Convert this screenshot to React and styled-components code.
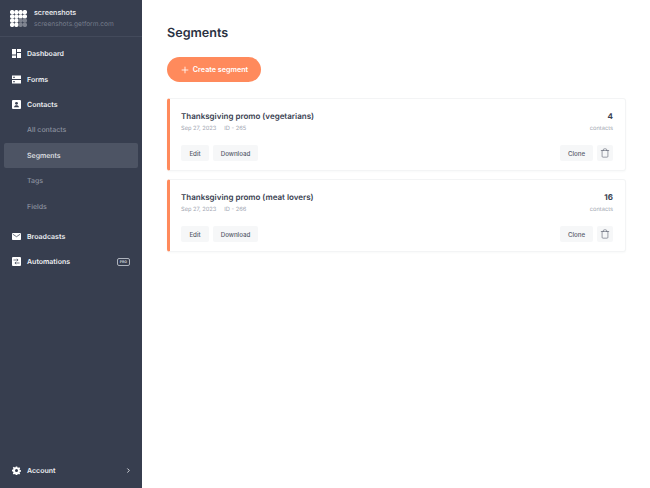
import React from 'react'
import styled, { createGlobalStyle } from 'styled-components'
import { Plus, Trash, ChevronRight } from 'lucide-react'

const GlobalStyle = createGlobalStyle`
    html, body {
        margin: 0;
        padding: 0;
        height: 100%;
        background: #fff;
        font-family: Inter, "Open Sans", sans-serif;
        text-rendering: geometricPrecision;
    }

    * {
        box-sizing: border-box;
    }
`

const Page = styled.div`
    display: flex;
    width: 650px;
    height: 488px;
    overflow: hidden;
`

const Sidebar = styled.aside`
    display: flex;
    flex-direction: column;
    flex: 0 0 142px;
    background: #373e4f;
`

const Brand = styled.div`
    display: flex;
    align-items: center;
    gap: 7px;
    height: 37px;
    padding: 0 10px;
    border-bottom: 1px solid #434a5b;
`

const BrandText = styled.div`
    display: flex;
    flex-direction: column;
    gap: 3px;
`

const BrandName = styled.span`
    color: #f1f2f4;
    font-size: 7.2px;
    font-weight: 500;
    line-height: 9px;
`

const BrandUrl = styled.span`
    color: #747b8a;
    font-size: 6.6px;
    line-height: 8px;
`

const Nav = styled.nav`
    display: flex;
    flex-direction: column;
    padding: 4px 4px 0;
`

const NavItem = styled.div`
    display: flex;
    align-items: center;
    gap: 6px;
    height: 25.4px;
    padding: 0 8px;
    color: #eef0f3;
    font-size: 7px;
    font-weight: 600;
`

const SubItem = styled.div`
    display: flex;
    align-items: center;
    height: 25.4px;
    padding-left: 23px;
    border-radius: 2px;
    color: ${ ({ $active }) => $active ? '#e6e8ec' : '#8b919f' };
    background: ${ ({ $active }) => $active ? '#4d5464' : 'transparent' };
    font-size: 7px;
    font-weight: 500;
`

const NavGap = styled.div`
    height: 5px;
`

const ProTag = styled.span`
    margin-left: auto;
    padding: 1px 2px;
    border: 1px solid #aeb3bd;
    border-radius: 2px;
    color: #c8cbd2;
    font-size: 3.5px;
    font-weight: 700;
    line-height: 4px;
`

const Footer = styled.div`
    margin-top: auto;
    padding: 0 4px 5px;
`

const FooterArrow = styled.span`
    display: flex;
    margin-left: auto;
    margin-right: -2px;
    color: #e4e6ea;
`

const Main = styled.main`
    flex: 1;
    padding: 24px 24px 0 25px;
`

const Title = styled.h1`
    margin: 0 0 14px;
    color: #2b3242;
    font-size: 12.6px;
    font-weight: 600;
    line-height: 19px;
`

const CreateButton = styled.button`
    display: flex;
    align-items: center;
    justify-content: center;
    gap: 3px;
    width: 94px;
    height: 25px;
    margin-bottom: 16px;
    padding: 0;
    border: 0;
    border-radius: 13px;
    background: #ff8a5c;
    color: #fff;
    font-family: inherit;
    font-size: 7.2px;
    font-weight: 600;
`

const CardList = styled.div`
    display: flex;
    flex-direction: column;
    gap: 8px;
`

const Card = styled.article`
    display: flex;
    flex-direction: column;
    height: 73px;
    padding: 12px 12px 9px 11px;
    border: 1px solid #f3f4f5;
    border-left: 3px solid #ff8a5c;
    border-radius: 3px;
    background: #fff;
    box-shadow: 0 1px 2px rgba(40, 50, 70, 0.03);
`

const CardTop = styled.div`
    display: flex;
    justify-content: space-between;
`

const CardTitle = styled.h3`
    margin: 0 0 3px;
    color: #3a4151;
    font-size: 8px;
    font-weight: 600;
    line-height: 11px;
`

const Meta = styled.div`
    display: flex;
    gap: 8px;
    color: #a0a5b0;
    font-size: 5.7px;
    line-height: 8px;
`

const Count = styled.div`
    display: flex;
    flex-direction: column;
    align-items: flex-end;
    gap: 3px;
`

const CountValue = styled.span`
    color: #3a4151;
    font-size: 8px;
    font-weight: 700;
    line-height: 11px;
`

const CountLabel = styled.span`
    color: #a0a5b0;
    font-size: 5.7px;
    line-height: 8px;
`

const CardActions = styled.div`
    display: flex;
    gap: 4px;
    margin-top: auto;
`

const ActionButton = styled.button`
    display: flex;
    align-items: center;
    justify-content: center;
    width: ${ ({ $width }) => $width }px;
    height: 16px;
    margin-left: ${ ({ $push }) => $push ? 'auto' : '0' };
    padding: 0;
    border: 0;
    border-radius: 2px;
    background: #f6f7f8;
    color: #565c6b;
    font-family: inherit;
    font-size: 6.2px;
    font-weight: 500;
`

const LogoMark = () => (
    <svg width="17" height="17" viewBox="0 0 17 17">
        { [ 0, 1, 2, 3 ].map( row => [ 0, 1, 2, 3 ].map( col => (
            <circle
                key={ `${ row }-${ col }` }
                cx={ 2.2 + col * 4.2 }
                cy={ 2.2 + row * 4.2 }
                r="2.25"
                fill={ row > 1 && col > 1 ? '#7f8490' : '#fff' }
            />
        ) ) ) }
    </svg>
)

const DashboardIcon = () => (
    <svg width="9" height="9" viewBox="0 0 9 9" fill="#fff">
        <rect width="4" height="5.500" />
        <rect x="5" width="4" height="3" />
        <rect y="6.500" width="4" height="2.500" />
        <rect x="5" y="4" width="4" height="5" />
    </svg>
)

const FormsIcon = () => (
    <svg width="9" height="9" viewBox="0 0 9 9" fill="#fff">
        <path d="M0 0.500h9v3.500h-9zM0 5h9v3.500h-9z" />
        <rect x="1" y="1.800" width="2" height="0.900" fill="#373e4f" />
        <rect x="1" y="6.300" width="2" height="0.900" fill="#373e4f" />
    </svg>
)

const ContactsIcon = () => (
    <svg width="9" height="9" viewBox="0 0 9 9">
        <rect width="9" height="9" rx="1" fill="#fff" />
        <circle cx="4.500" cy="3.300" r="1.400" fill="#373e4f" />
        <path d="M2 7.200c0.300-1.400 1.300-1.900 2.500-1.900s2.200 0.500 2.500 1.900z" fill="#373e4f" />
    </svg>
)

const BroadcastsIcon = () => (
    <svg width="9" height="9" viewBox="0 0 9 9">
        <rect y="1" width="9" height="7" rx="0.800" fill="#fff" />
        <path d="M0.800 2.200l3.700 2.500 3.700-2.500" fill="none" stroke="#373e4f" strokeWidth="0.700" />
    </svg>
)

const AutomationsIcon = () => (
    <svg width="9" height="9" viewBox="0 0 9 9">
        <rect width="9" height="9" rx="1" fill="#fff" />
        <path d="M1.500 3h4.500M4.800 1.800l1.300 1.200-1.300 1.200M7.500 6h-4.500M4.200 4.800l-1.300 1.200 1.300 1.200" fill="none" stroke="#373e4f" strokeWidth="0.700" />
    </svg>
)

const GearIcon = () => (
    <svg width="9" height="9" viewBox="0 0 24 24" fill="#fff">
        <path fillRule="evenodd" d="M10 1h4l.6 3.100 1.900.8 2.600-1.800 2.800 2.800-1.800 2.600.8 1.900 3.100.6v4l-3.100.6-.8 1.900 1.800 2.600-2.800 2.800-2.600-1.800-1.900.8-.6 3.100h-4l-.6-3.100-1.900-.8-2.600 1.800-2.800-2.800 1.800-2.600-.8-1.900L0 14v-4l3.100-.6.800-1.900-1.800-2.600 2.800-2.800 2.600 1.800 1.900-.8zM12 8a4 4 0 1 0 0 8 4 4 0 0 0 0-8z" />
    </svg>
)

const segments = [
    { id: 265, name: 'Thanksgiving promo (vegetarians)', count: 4 },
    { id: 266, name: 'Thanksgiving promo (meat lovers)', count: 16 }
]

const App = () => (
    <Page>
        <GlobalStyle />
        <Sidebar>
            <Brand>
                <LogoMark />
                <BrandText>
                    <BrandName>screenshots</BrandName>
                    <BrandUrl>screenshots.getform.com</BrandUrl>
                </BrandText>
            </Brand>
            <Nav>
                <NavItem><DashboardIcon />Dashboard</NavItem>
                <NavItem><FormsIcon />Forms</NavItem>
                <NavItem><ContactsIcon />Contacts</NavItem>
                <SubItem>All contacts</SubItem>
                <SubItem $active>Segments</SubItem>
                <SubItem>Tags</SubItem>
                <SubItem>Fields</SubItem>
                <NavGap />
                <NavItem><BroadcastsIcon />Broadcasts</NavItem>
                <NavItem><AutomationsIcon />Automations<ProTag>PRO</ProTag></NavItem>
            </Nav>
            <Footer>
                <NavItem>
                    <GearIcon />Account
                    <FooterArrow><ChevronRight size={ 7 } strokeWidth={ 3 } /></FooterArrow>
                </NavItem>
            </Footer>
        </Sidebar>
        <Main>
            <Title>Segments</Title>
            <CreateButton><Plus size={ 10 } strokeWidth={ 2 } />Create segment</CreateButton>
            <CardList>
                { segments.map( segment => (
                    <Card key={ segment.id }>
                        <CardTop>
                            <div>
                                <CardTitle>{ segment.name }</CardTitle>
                                <Meta>
                                    <span>Sep 27, 2023</span>
                                    <span>ID - { segment.id }</span>
                                </Meta>
                            </div>
                            <Count>
                                <CountValue>{ segment.count }</CountValue>
                                <CountLabel>contacts</CountLabel>
                            </Count>
                        </CardTop>
                        <CardActions>
                            <ActionButton $width={ 28 }>Edit</ActionButton>
                            <ActionButton $width={ 45 }>Download</ActionButton>
                            <ActionButton $width={ 33 } $push>Clone</ActionButton>
                            <ActionButton $width={ 16 }><Trash size={ 10 } strokeWidth={ 1.400 } /></ActionButton>
                        </CardActions>
                    </Card>
                ) ) }
            </CardList>
        </Main>
    </Page>
)

export default App
